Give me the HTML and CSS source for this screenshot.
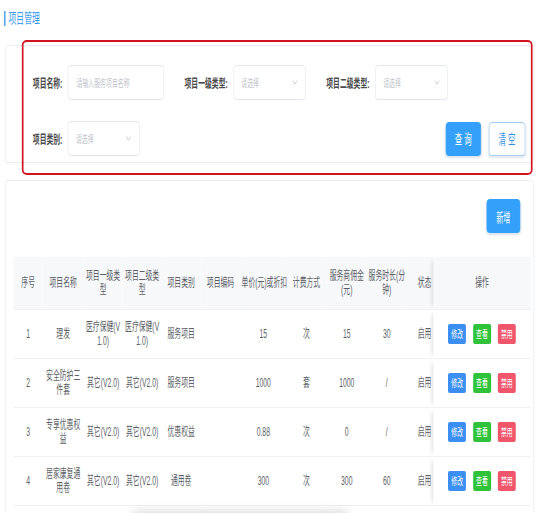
FILE: index.html
```html
<!DOCTYPE html>
<html lang="zh-CN">
<head>
<meta charset="utf-8">
<title>项目管理</title>
<link rel="stylesheet" href="styles.css">
</head>
<body>
<div class="page">
  <h1 class="page-title">项目管理</h1>

  <section class="card filter-card">
    <div class="form-row">
      <div class="form-item">
        <label class="form-label">项目名称:</label>
        <div class="input input-name"><span>请输入服务项目名称</span></div>
      </div>
      <div class="form-item">
        <label class="form-label">项目一级类型:</label>
        <div class="input select sel-a"><span>请选择</span><svg class="chev" width="9" height="5" viewBox="0 0 9 5"><polyline points="0.5,0.5 4.5,4.2 8.5,0.5" fill="none" stroke="#c0c4cc" stroke-width="1"/></svg></div>
      </div>
      <div class="form-item">
        <label class="form-label">项目二级类型:</label>
        <div class="input select sel-b"><span>请选择</span><svg class="chev" width="9" height="5" viewBox="0 0 9 5"><polyline points="0.5,0.5 4.5,4.2 8.5,0.5" fill="none" stroke="#c0c4cc" stroke-width="1"/></svg></div>
      </div>
    </div>
    <div class="form-row">
      <div class="form-item">
        <label class="form-label">项目类别:</label>
        <div class="input select sel-c"><span>请选择</span><svg class="chev" width="9" height="5" viewBox="0 0 9 5"><polyline points="0.5,0.5 4.5,4.2 8.5,0.5" fill="none" stroke="#c0c4cc" stroke-width="1"/></svg></div>
      </div>
      <div class="btn-group">
        <button class="btn btn-primary btn-query">查 询</button>
        <button class="btn btn-plain btn-clear">清 空</button>
      </div>
    </div>
  </section>

  <section class="card table-card">
    <div class="toolbar"><button class="btn btn-primary btn-add">新增</button></div>
    <table class="data-table">
      <colgroup>
        <col class="w-idx"><col class="w-name"><col class="w-t"><col class="w-t"><col class="w-t"><col class="w-code"><col class="w-price"><col class="w-m"><col class="w-m"><col class="w-code"><col class="w-status"><col class="w-op">
      </colgroup>
      <thead>
        <tr>
          <th>序号</th><th>项目名称</th><th>项目一级类型</th><th>项目二级类型</th><th>项目类别</th><th>项目编码</th><th class="nowrap">单价(元)或折扣</th><th>计费方式</th><th>服务商佣金(元)</th><th>服务时长(分钟)</th><th class="col-status">状态</th><th class="col-op">操作</th>
        </tr>
      </thead>
      <tbody>
        <tr>
          <td>1</td><td>理发</td><td>医疗保健(V1.0)</td><td>医疗保健(V1.0)</td><td>服务项目</td><td></td><td>15</td><td>次</td><td>15</td><td>30</td><td class="col-status">启用</td>
          <td class="col-op"><span class="act act-edit">修改</span><span class="act act-view">查看</span><span class="act act-off">禁用</span></td>
        </tr>
        <tr>
          <td>2</td><td>安全防护三件套</td><td>其它(V2.0)</td><td>其它(V2.0)</td><td>服务项目</td><td></td><td>1000</td><td>套</td><td>1000</td><td>/</td><td class="col-status">启用</td>
          <td class="col-op"><span class="act act-edit">修改</span><span class="act act-view">查看</span><span class="act act-off">禁用</span></td>
        </tr>
        <tr>
          <td>3</td><td>专享优惠权益</td><td>其它(V2.0)</td><td>其它(V2.0)</td><td>优惠权益</td><td></td><td>0.88</td><td>次</td><td>0</td><td>/</td><td class="col-status">启用</td>
          <td class="col-op"><span class="act act-edit">修改</span><span class="act act-view">查看</span><span class="act act-off">禁用</span></td>
        </tr>
        <tr>
          <td>4</td><td>居家康复通用卷</td><td>其它(V2.0)</td><td>其它(V2.0)</td><td>通用卷</td><td></td><td>300</td><td>次</td><td>300</td><td>60</td><td class="col-status">启用</td>
          <td class="col-op"><span class="act act-edit">修改</span><span class="act act-view">查看</span><span class="act act-off">禁用</span></td>
        </tr>
      </tbody>
    </table>
  </section>

  <div class="highlight-box"></div>
  <div class="float-shadow"></div>
</div>
</body>
</html>
```
FILE: styles.css
```css
html, body {
  margin: 0;
  padding: 0;
  overflow: hidden;
  background: #fff;
}
body {
  font-family: "Liberation Sans", "Noto Sans CJK SC", sans-serif;
  color: #606266;
}
/* The whole screen is horizontally condensed: lay out in wide units, then squeeze. */
.page {
  position: relative;
  box-sizing: border-box;
  width: 964px;
  height: 513px;
  padding-top: 11px;
  transform: scaleX(0.56);
  transform-origin: 0 0;
}
.page-title {
  margin: 0 0 0 6.6px;
  padding-left: 5.5px;
  border-left: 3.3px solid #5aa9f0;
  height: 15px;
  font-size: 14px;
  line-height: 15px;
  font-weight: normal;
  color: #3d9cf0;
}
.card {
  box-sizing: border-box;
  margin-left: 8.9px;
  width: 944px;
  border: 1px solid #ebeef5;
  border-radius: 6.6px / 4px;
  background: #fff;
  box-shadow: 0 1px 4px rgba(0, 0, 0, 0.04);
}
.filter-card {
  margin-top: 19px;
  height: 118px;
  padding: 19px 14.4px 0 48.7px;
}
.form-row {
  display: flex;
  align-items: center;
  gap: 36.5px;
  height: 35px;
}
.form-row + .form-row {
  margin-top: 21px;
}
.form-item {
  display: flex;
  align-items: center;
  gap: 10px;
}
.form-label {
  font-size: 12.2px;
  font-weight: bold;
  color: #4a4a4a;
  white-space: nowrap;
}
.input {
  box-sizing: border-box;
  height: 35px;
  display: flex;
  align-items: center;
  justify-content: space-between;
  padding: 0 14.4px 0 13.3px;
  border: 1px solid #e4e7ed;
  border-radius: 6.6px / 4px;
  font-size: 10.5px;
  color: #c0c4cc;
  background: #fff;
}
.input-name { width: 171.6px; padding-left: 14.4px; }
.sel-a { width: 129.5px; }
.sel-b { width: 130.6px; }
.sel-c { width: 128.4px; }
.chev { display: block; }
.btn-group {
  margin-left: auto;
  display: flex;
  gap: 14.4px;
}
.btn {
  box-sizing: border-box;
  height: 34px;
  padding: 0;
  border-radius: 6.6px / 4px;
  font-family: inherit;
  font-size: 13.3px;
  cursor: pointer;
}
.btn-primary {
  background: #34a0fa;
  border: 1px solid #34a0fa;
  color: #fff;
  box-shadow: 0 2px 3px rgba(0, 60, 120, 0.15);
}
.btn-plain {
  background: #fff;
  border: 1px solid #a3cff5;
  color: #2f8fe8;
  box-shadow: 0 2px 3px rgba(0, 60, 120, 0.12);
}
.btn-query { width: 63.1px; }
.btn-clear { width: 64.2px; }
.table-card {
  margin-top: 17px;
  padding: 18px 5.5px 30px 14.4px;
}
.toolbar {
  display: flex;
  justify-content: flex-end;
  padding-right: 17.7px;
  margin-bottom: 24px;
}
.btn-add {
  width: 59.8px;
  font-size: 12.7px;
}
.data-table {
  width: 923.3px;
  table-layout: fixed;
  border-collapse: separate;
  border-spacing: 0;
}
.w-idx { width: 52px; }
.w-name { width: 73px; }
.w-t { width: 69.7px; }
.w-code { width: 70.9px; }
.w-price { width: 82px; }
.w-m { width: 72px; }
.w-status { width: 47.6px; }
.w-op { width: 173.8px; }
.data-table th,
.data-table td {
  padding: 0 2.2px;
  text-align: center;
  font-size: 12.2px;
  line-height: 14px;
  font-weight: normal;
  color: #5c5f66;
  word-break: break-all;
  border-bottom: 1px solid #eef0f4;
}
.data-table th {
  height: 52px;
  background: #f7f8fa;
}
.data-table td {
  height: 48px;
  background: #fff;
}
.data-table .nowrap { white-space: nowrap; }
.data-table .col-status {
  text-align: right;
  padding-right: 3.3px;
}
.data-table .col-op {
  box-shadow: -6px 0 6px -4px rgba(0, 0, 0, 0.12);
}
.data-table td.col-op {
  font-size: 0;
  line-height: 0;
}
.act {
  display: inline-block;
  width: 32.1px;
  height: 20px;
  line-height: 20px;
  margin: 0 6.1px;
  border-radius: 3.3px / 2px;
  font-size: 10.5px;
  color: #fff;
  vertical-align: middle;
}
.act-edit { background: #3b8ff3; }
.act-view { background: #30c23a; }
.act-off { background: #f0566b; }
.highlight-box {
  position: absolute;
  left: 38.8px;
  top: 40px;
  width: 912.5px;
  height: 135px;
  box-sizing: border-box;
  border: 2px solid #d2141f;
  border-left-width: 3.3px;
  border-right-width: 3.3px;
  border-radius: 8.9px / 5px;
  pointer-events: none;
}
.float-shadow {
  position: absolute;
  left: 238px;
  top: 515px;
  width: 382px;
  height: 30px;
  border-radius: 8px;
  background: #fff;
  box-shadow: 0 0 12px 5px rgba(0, 0, 0, 0.13);
}
```
